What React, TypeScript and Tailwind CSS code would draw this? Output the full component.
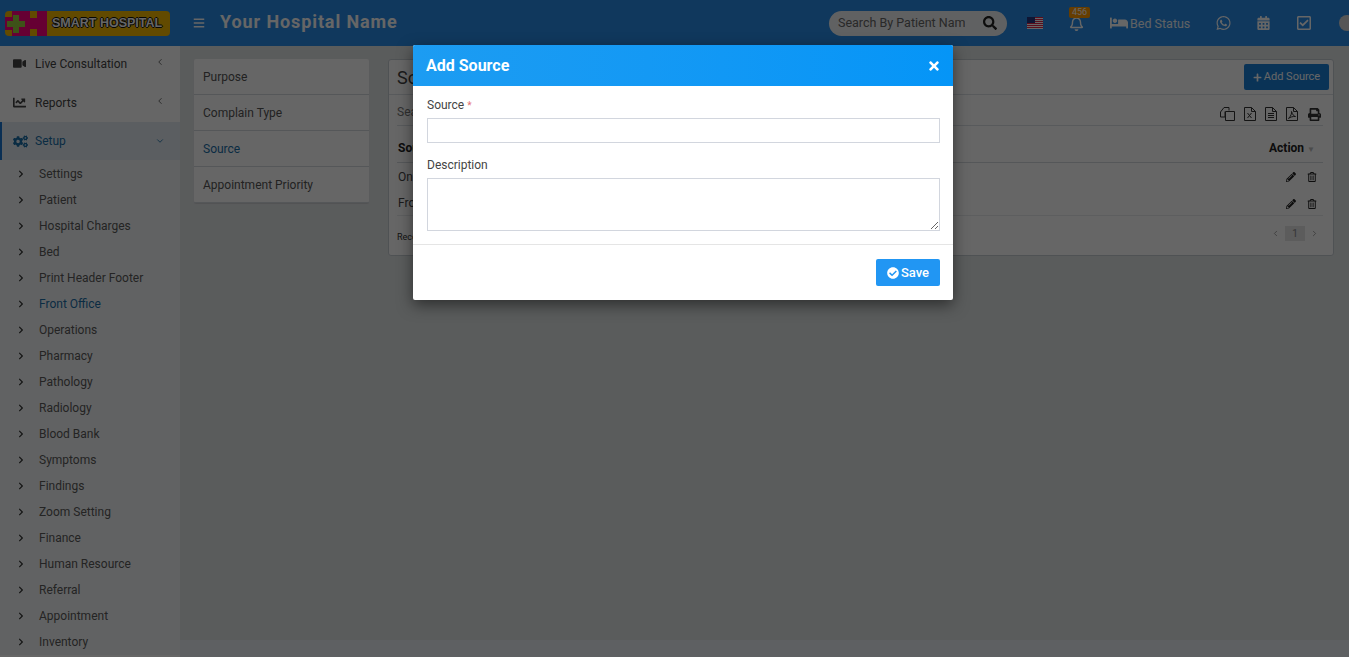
import React from "react";
import {
  FaVideo, FaChartLine, FaCogs, FaChevronRight, FaBars, FaSearch,
  FaRegBell, FaBed, FaWhatsapp, FaCalendarAlt, FaRegCheckSquare, FaPlus, FaPrint, FaPencilAlt, FaRegTrashAlt, FaCheckCircle, FaTimes,
} from "react-icons/fa";
import { ChevronLeft, ChevronDown, ChevronRight } from "lucide-react";

const subs = ["Settings","Patient","Hospital Charges","Bed","Print Header Footer","Front Office","Operations","Pharmacy","Pathology","Radiology","Blood Bank","Symptoms","Findings","Zoom Setting","Finance","Human Resource","Referral","Appointment","Inventory"];
const tabs = ["Purpose","Complain Type","Source","Appointment Priority"];

function Logo() {
  return (
    <div className="ml-[5px] flex h-[25px] w-[165px] shrink-0 items-center rounded-[4px] bg-[#f5b800]">
      <svg width="42" height="25" viewBox="0 0 42 25" className="shrink-0">
        <rect x="7" y="0" width="35" height="25" fill="#ff0080" />
        <rect x="0" y="6" width="10" height="13" fill="#ff0080" />
        <path d="M2 10h6V4h6v6h6v6h-6v6H8v-6H2z" fill="#9ccc3c" />
        <rect x="25" y="0" width="7" height="7" fill="#f5b800" />
        <rect x="25" y="18" width="7" height="7" fill="#f5b800" />
      </svg>
      <span className="ml-[5px] whitespace-nowrap font-['Liberation_Sans',sans-serif] text-[12.5px] font-bold text-white [text-shadow:1px_0_0_#111,-1px_0_0_#111,0_1px_0_#111,0_-1px_0_#111]">SMART HOSPITAL</span>
    </div>
  );
}

function Flag() {
  return (
    <svg width="16" height="12" viewBox="0 0 16 12" className="shrink-0">
      <rect width="16" height="12" fill="#fff" />
      {[0,2,4,6,8,10].map((y) => <rect key={y} y={y} width="16" height="1" fill="#e0254a" />)}
      <rect width="8" height="6" fill="#26357f" />
    </svg>
  );
}

function Header() {
  return (
    <header className="flex h-[46px] shrink-0 items-center overflow-hidden bg-[#2a8de8] text-white">
      <Logo />
      <FaBars className="ml-[23px] w-[12px] shrink-0 text-[12px]" />
      <span className="mb-[3px] ml-[15px] w-[177px] shrink-0 whitespace-nowrap text-[18px] font-bold tracking-[0.9px]">Your Hospital Name</span>
      <div className="ml-[432px] flex h-[25px] w-[178px] shrink-0 items-center rounded-full bg-[#f1f3f5] pl-[9px] pr-[9px] text-[12.5px] text-[#666]">
        <span className="w-[127px] overflow-hidden whitespace-nowrap">Search By Patient Name</span>
        <FaSearch className="ml-auto mr-[1px] text-[14px] text-[#222]" />
      </div>
      <div className="ml-[20px] shrink-0"><Flag /></div>
      <div className="relative ml-[26px] w-[15px] shrink-0">
        <FaRegBell className="text-[15px]" />
        <span className="absolute -top-[9px] left-0 rounded-[2px] bg-[#ff9800] px-[3px] text-[9px] leading-[11px]">456</span>
      </div>
      <FaBed className="ml-[26px] w-[18px] shrink-0 text-[18px]" />
      <span className="ml-[2px] mt-[2px] w-[60px] shrink-0 whitespace-nowrap text-[12.5px] text-[#f0f4f8]">Bed Status</span>
      <FaWhatsapp className="ml-[26px] w-[15px] shrink-0 text-[16px]" />
      <FaCalendarAlt className="ml-[26px] w-[13px] shrink-0 text-[14px]" />
      <FaRegCheckSquare className="ml-[27px] w-[14px] shrink-0 text-[16px]" />
      <div className="ml-[28px] h-[16px] w-[16px] shrink-0 rounded-full bg-[#d8d8d8]" />
    </header>
  );
}

function Sidebar() {
  return (
    <aside className="w-[180px] shrink-0 bg-white text-[12px] text-[#5a5a5a]">
      <div className="flex h-[38px] items-start pl-[13px] pr-[15px] pt-[9px] text-[#444]">
        <FaVideo className="mt-[2px] text-[13px]" />
        <span className="ml-[9px]">Live Consultation</span>
        <ChevronLeft size={10} strokeWidth={2} className="ml-auto mt-[2px] text-[#555]" />
      </div>
      <div className="flex h-[38px] items-start pl-[13px] pr-[15px] pt-[10px] text-[#444]">
        <FaChartLine className="mt-[2px] text-[13px]" />
        <span className="ml-[9px]">Reports</span>
        <ChevronLeft size={10} strokeWidth={2} className="ml-auto mt-[2px] text-[#555]" />
      </div>
      <div className="flex h-[38px] items-center border-l-2 border-[#1976d2] bg-[#e3ecf3] pl-[11px] pr-[15px] text-[#1a6ea8]">
        <FaCogs className="text-[15px]" />
        <span className="ml-[7px]">Setup</span>
        <ChevronDown size={10} strokeWidth={2} className="ml-auto" />
      </div>
      <div className="bg-[#f3f6f8] pl-[17px] pt-[1px]">
        {subs.map((s) => (
          <div key={s} className={"flex h-[26px] items-center " + (s === "Front Office" ? "text-[#1a6ea8]" : "")}>
            <FaChevronRight className="text-[8px] text-[#333]" />
            <span className="ml-[14px] whitespace-nowrap">{s}</span>
          </div>
        ))}
      </div>
    </aside>
  );
}

function Tabs() {
  return (
    <div className="h-[144px] w-[175px] shrink-0 rounded-[2px] bg-white text-[12px] shadow-[0_1px_1px_rgba(0,0,0,0.1)]">
      {tabs.map((t) => (
        <div key={t} className={"flex h-[36px] items-center border-b border-[#d5d9de] pl-[9px] " + (t === "Source" ? "text-[#1a6ea8]" : "text-[#555]")}>{t}</div>
      ))}
    </div>
  );
}

function Doc({ children }: { children?: React.ReactNode }) {
  return (
    <svg width="12" height="14" viewBox="0 0 12 14" fill="none" stroke="#333" strokeWidth="1" className="shrink-0">
      <path d="M.5.5h7l4 4v9H.5zM7.5.5v4h4" />
      {children}
    </svg>
  );
}

function ToolIcons() {
  return (
    <div className="flex items-center gap-[9px] pr-[2px]">
      <svg width="15" height="14" viewBox="0 0 15 14" fill="none" stroke="#333" strokeWidth="1" className="shrink-0">
        <path d="M5 4.500V10H.5V5L4 .5h5V3.500" />
        <path d="M5.500 4.500h9v9h-9z" fill="#fff" />
      </svg>
      <Doc><path d="M3.500 6l4 5M7.500 6l-4 5" /></Doc>
      <Doc><path d="M3 6.500h6M3 8.500h6M3 10.500h6" /></Doc>
      <Doc><path d="M2.500 11.500C5 9 6 6 5.500 4.500c1 3 2 4.500 4 5-3-.2-5 .5-7 2z" /></Doc>
      <FaPrint className="ml-[1px] text-[13px] text-[#333]" />
    </div>
  );
}

function Panel() {
  return (
    <section className="ml-[19px] h-[197px] w-[946px] shrink-0 rounded-[3px] border border-[#c6ccd2] bg-white text-[12px] text-[#444]">
      <div className="flex h-[35px] items-center justify-between border-b border-[#dde1e5] pl-[8px] pr-[4px]">
        <span className="text-[18px] text-[#444]">Source List</span>
        <button className="flex h-[26px] w-[85px] items-center justify-center rounded-[2px] bg-[#1a80d8] text-[11px] text-white">
          <FaPlus className="mr-[2px] text-[9px]" />Add Source
        </button>
      </div>
      <div className="pl-[8px] pr-[10px]">
        <div className="flex h-[31px] items-end justify-between border-b border-[#dde1e5] pb-[4px] text-[#777]">
          <span>Search...</span>
          <ToolIcons />
        </div>
        <div className="flex h-[37px] items-center justify-between border-b border-[#d5d9de] pl-px pr-[8px] pt-[8px] font-bold text-[#222]">
          <span>Source</span>
          <span>Action <span className="text-[8px] font-normal text-[#bbb]">▼</span></span>
        </div>
        {["Online","From Visitors"].map((r, i) => (
          <div key={r} className={"flex items-center justify-between pl-px pr-[6px] " + (i === 1 ? "h-[27px] border-b border-[#e8ebee] pt-[2px]" : "h-[26px] pt-[1px]")}>
            <span>{r}</span>
            <div className="mt-px flex items-center gap-[11px] text-[10px] text-[#222]"><FaPencilAlt /><FaRegTrashAlt /></div>
          </div>
        ))}
        <div className="flex h-[36px] items-start justify-between pr-[4px] pt-[10px] text-[9px] text-[#333]">
          <span className="mt-[5px]">Records: 1 to 2 of 2</span>
          <div className="flex items-center gap-[5px] text-[11px] text-[#888]">
            <ChevronLeft size={9} />
            <span className="flex h-[15px] w-[20px] items-center justify-center bg-[#e5e5e5] text-[10px]">1</span>
            <ChevronRight size={9} />
          </div>
        </div>
      </div>
    </section>
  );
}

function Modal() {
  return (
    <div className="absolute left-[413px] top-[45px] w-[540px] rounded-[2px] bg-white shadow-[0_5px_15px_rgba(0,0,0,0.5)]">
      <div className="flex h-[41px] items-center justify-between rounded-t-[2px] bg-gradient-to-r from-[#1c9cf2] to-[#0595f7] pl-[13px] pr-[12px] text-white">
        <span className="text-[16px] font-bold">Add Source</span>
        <FaTimes className="mt-[1px] text-[14px]" />
      </div>
      <div className="h-[159px] border-b border-[#e5e5e5] px-[14px] pt-[12px] text-[12px] text-[#444]">
        <label className="block h-[20px] leading-[15px]">Source <span className="text-[10px] text-[#e57373]">*</span></label>
        <input className="block h-[25px] w-[513px] border border-[#d2d6de] bg-white outline-none" />
        <label className="mt-[15px] block h-[20px] leading-[15px]">Description</label>
        <textarea className="block h-[53px] w-[513px] border border-[#d2d6de] bg-white outline-none" />
      </div>
      <div className="flex h-[55px] items-start justify-end pr-[13px] pt-[14px]">
        <button className="flex h-[27px] w-[64px] items-center justify-center rounded-[2px] bg-[#2196f3] text-[13px] font-medium text-white">
          <FaCheckCircle className="mr-[2px] text-[12px]" />Save
        </button>
      </div>
    </div>
  );
}

export default function App() {
  return (
    <div className="relative flex h-screen flex-col overflow-hidden bg-[#ecf0f5] font-['Roboto',sans-serif]">
      <Header />
      <div className="flex min-h-0 flex-1 overflow-hidden">
        <Sidebar />
        <main className="flex min-w-0 flex-1 flex-col">
          <div className="flex flex-1 items-start bg-[#e2e5e7] pl-[14px] pt-[13px]">
            <Tabs />
            <Panel />
          </div>
          <div className="h-[17px] shrink-0 bg-[#ecf0f5]" />
        </main>
      </div>
      <div className="absolute inset-0 bg-black/60" />
      <Modal />
    </div>
  );
}
